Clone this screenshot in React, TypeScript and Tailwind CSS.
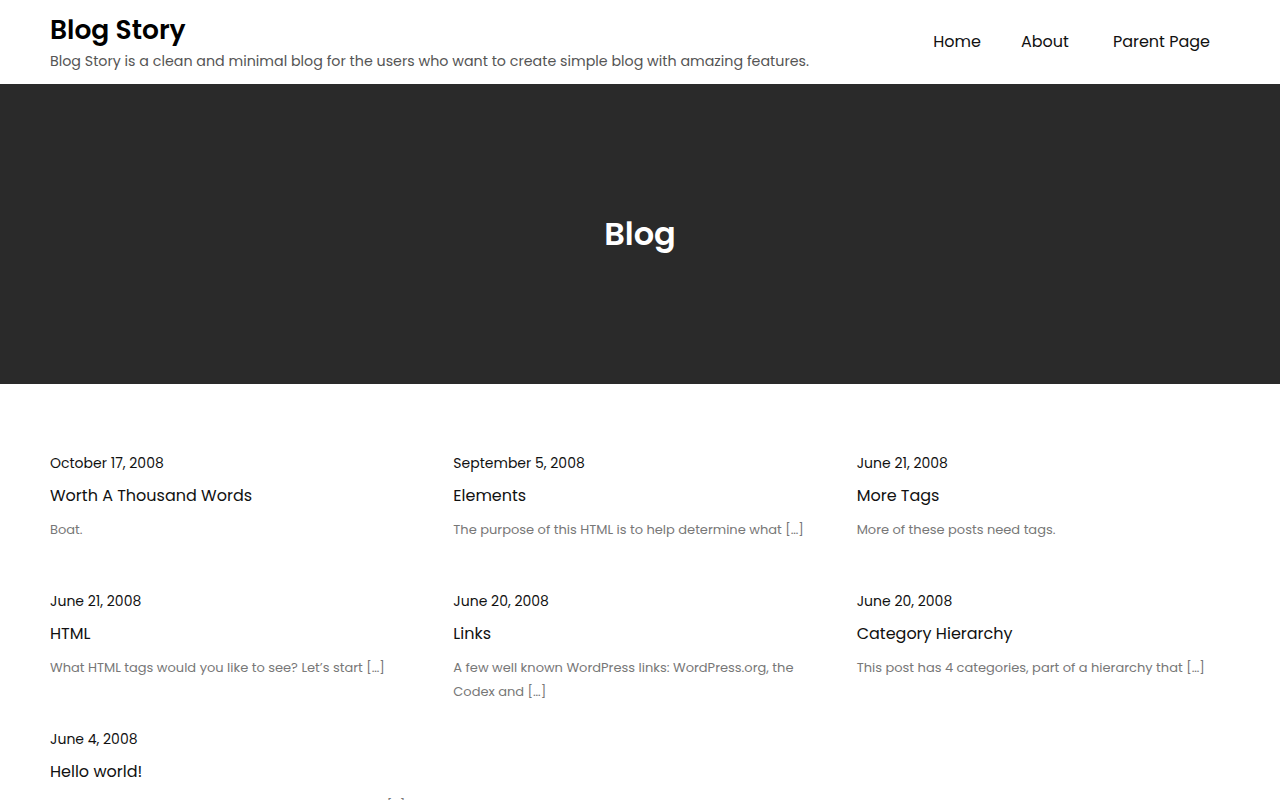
import React from 'react'

type Post = {
  date: string
  title: string
  excerpt: string
}

const posts: Post[] = [
  { date: 'October 17, 2008', title: 'Worth A Thousand Words', excerpt: 'Boat.' },
  { date: 'September 5, 2008', title: 'Elements', excerpt: 'The purpose of this HTML is to help determine what […]' },
  { date: 'June 21, 2008', title: 'More Tags', excerpt: 'More of these posts need tags.' },
  { date: 'June 21, 2008', title: 'HTML', excerpt: 'What HTML tags would you like to see? Let’s start […]' },
  { date: 'June 20, 2008', title: 'Links', excerpt: 'A few well known WordPress links: WordPress.org, the Codex and […]' },
  { date: 'June 20, 2008', title: 'Category Hierarchy', excerpt: 'This post has 4 categories, part of a hierarchy that […]' },
  { date: 'June 4, 2008', title: 'Hello world!', excerpt: 'Welcome to WordPress. This is your first post. Edit or […]' },
]

const PostCard: React.FC<{ post: Post }> = ({ post }) => (
  <article>
    <p className="text-[14px] leading-[22px] text-[#111]">{post.date}</p>
    <h2 className="mt-[9px] text-[16px] leading-[26px] text-[#111]">{post.title}</h2>
    <p className="mt-[9px] min-h-[48px] text-[13px] leading-[24px] text-[#777]">{post.excerpt}</p>
  </article>
)

export default function App() {
  return (
    <div className="min-h-screen bg-white font-['Poppins','Inter',sans-serif]">
      {/* 헤더 */}
      <header className="flex h-[84px] items-start justify-between px-[50px]">
        <div className="flex flex-col pt-[15px]">
          <h1 className="text-[26.5px] font-semibold leading-[30px] text-black">Blog Story</h1>
          <p className="mt-[5px] text-[14.25px] leading-[22px] text-[#555]">
            Blog Story is a clean and minimal blog for the users who want to create simple blog with amazing features.
          </p>
        </div>
        <nav className="mr-[20px] flex items-center self-center text-[16px] text-[#111]">
          <a className="mr-[40px]">Home</a>
          <a className="mr-[44px]">About</a>
          <a>Parent Page</a>
        </nav>
      </header>

      {/* 히어로 */}
      <section className="flex h-[300px] items-center justify-center bg-[#2a2a2a]">
        <h1 className="text-[32px] font-semibold text-white">Blog</h1>
      </section>

      {/* 포스트 그리드 */}
      <main className="px-[50px] pt-[68px] pb-[40px]">
        <div className="grid grid-cols-3 gap-x-[30px] gap-y-[24px]">
          {posts.map((post, i) => (
            <PostCard key={i} post={post} />
          ))}
        </div>
      </main>
    </div>
  )
}
